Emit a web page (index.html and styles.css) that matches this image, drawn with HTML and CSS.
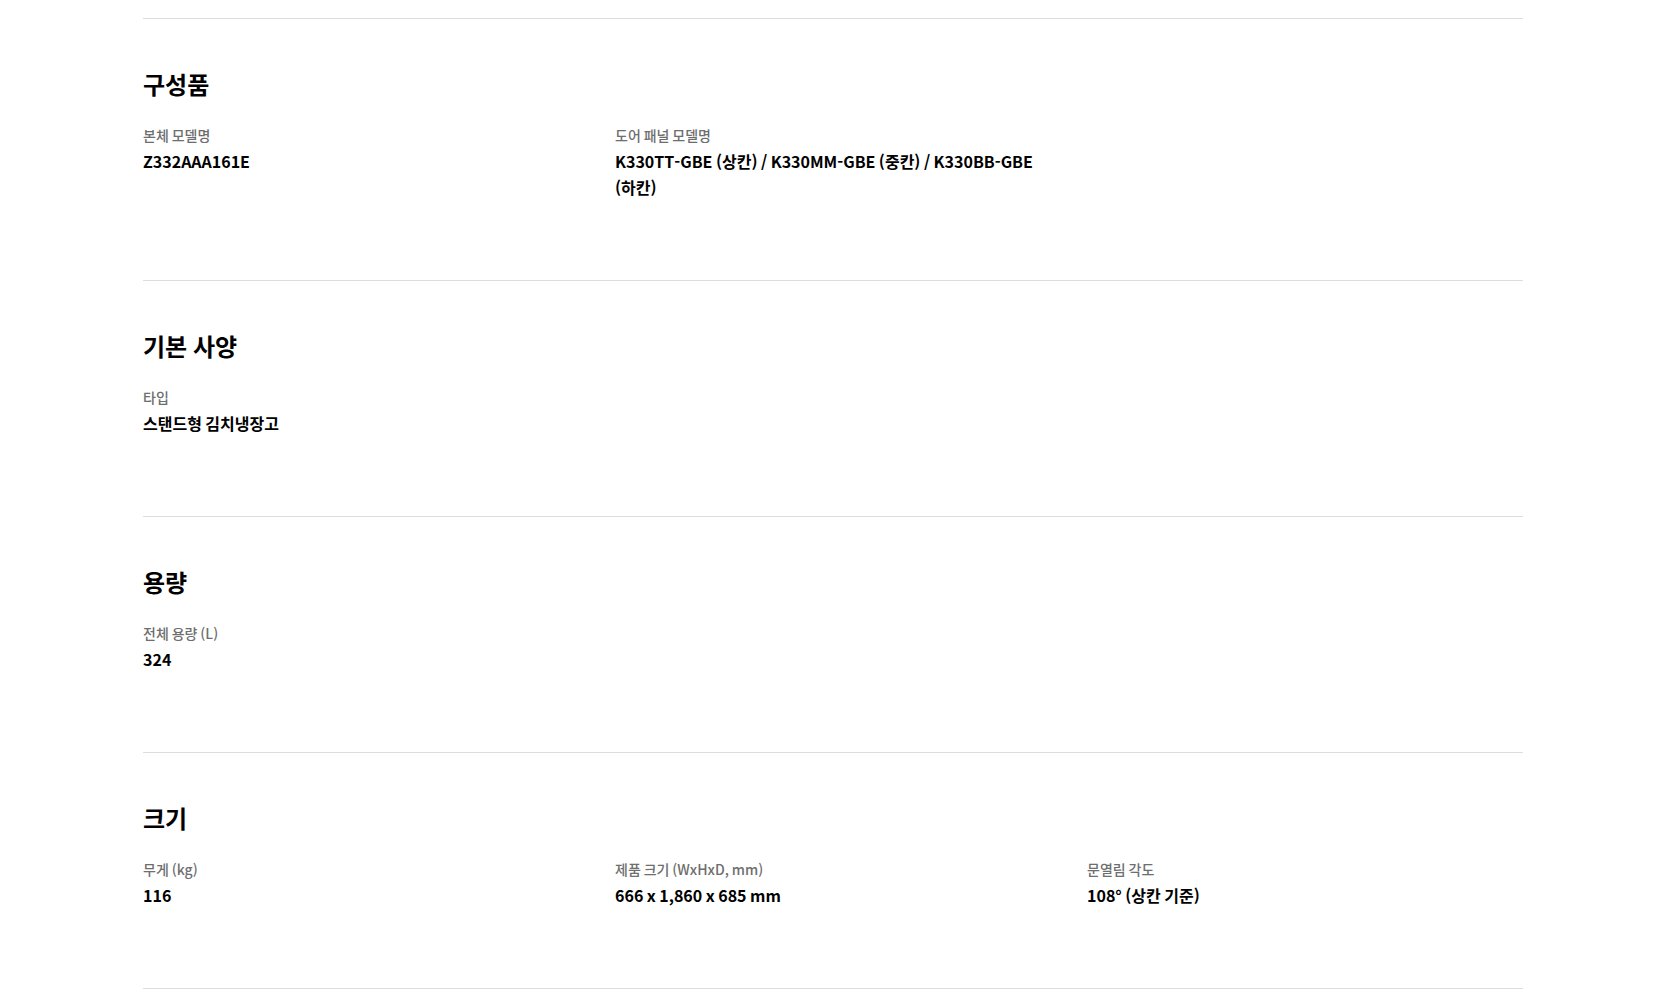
FILE: index.html
```html
<!DOCTYPE html>
<html lang="ko">
<head>
<meta charset="utf-8">
<title>제품 사양</title>
<link rel="stylesheet" href="styles.css">
</head>
<body>
<main class="specs">
  <section class="spec-group">
    <h2 class="spec-title">구성품</h2>
    <dl class="spec-list">
      <div class="spec-item"><dt class="spec-label">본체 모델명</dt><dd class="spec-value">Z332AAA161E</dd></div>
      <div class="spec-item"><dt class="spec-label">도어 패널 모델명</dt><dd class="spec-value">K330TT-GBE (상칸) / K330MM-GBE (중칸) / K330BB-GBE (하칸)</dd></div>
    </dl>
  </section>
  <section class="spec-group">
    <h2 class="spec-title">기본 사양</h2>
    <dl class="spec-list">
      <div class="spec-item"><dt class="spec-label">타입</dt><dd class="spec-value">스탠드형 김치냉장고</dd></div>
    </dl>
  </section>
  <section class="spec-group">
    <h2 class="spec-title">용량</h2>
    <dl class="spec-list">
      <div class="spec-item"><dt class="spec-label">전체 용량 (L)</dt><dd class="spec-value">324</dd></div>
    </dl>
  </section>
  <section class="spec-group">
    <h2 class="spec-title">크기</h2>
    <dl class="spec-list">
      <div class="spec-item"><dt class="spec-label">무게 (kg)</dt><dd class="spec-value">116</dd></div>
      <div class="spec-item"><dt class="spec-label">제품 크기 (WxHxD, mm)</dt><dd class="spec-value">666 x 1,860 x 685 mm</dd></div>
      <div class="spec-item"><dt class="spec-label">문열림 각도</dt><dd class="spec-value">108° (상칸 기준)</dd></div>
    </dl>
  </section>
</main>
</body>
</html>
```

FILE: styles.css
```css
* {
  box-sizing: border-box;
}

html, body {
  margin: 0;
  padding: 0;
  background: #ffffff;
}

body {
  font-family: "Noto Sans CJK KR", "Noto Sans", sans-serif;
  color: #000000;
  word-spacing: -1px;
}

.specs {
  width: 1380px;
  margin-left: 143px;
  padding-top: 18px;
}

.spec-group {
  border-top: 1px solid #dddddd;
  padding: 49px 0 80px;
}

.spec-group:last-child {
  border-bottom: 1px solid #dddddd;
}

.spec-title {
  margin: 0 0 25px;
  font-size: 24px;
  line-height: 32px;
  font-weight: 700;
  letter-spacing: 0;
}

.spec-list {
  margin: 0;
  display: grid;
  grid-template-columns: repeat(3, 436px);
  column-gap: 36px;
}

.spec-item {
  display: flex;
  flex-direction: column;
  gap: 3px;
}

.spec-label {
  font-size: 14px;
  line-height: 20px;
  font-weight: 500;
  color: #6e6e6e;
  letter-spacing: 0;
}

.spec-value {
  margin: 0;
  font-size: 16px;
  line-height: 26px;
  font-weight: 700;
  letter-spacing: 0;
}
```
